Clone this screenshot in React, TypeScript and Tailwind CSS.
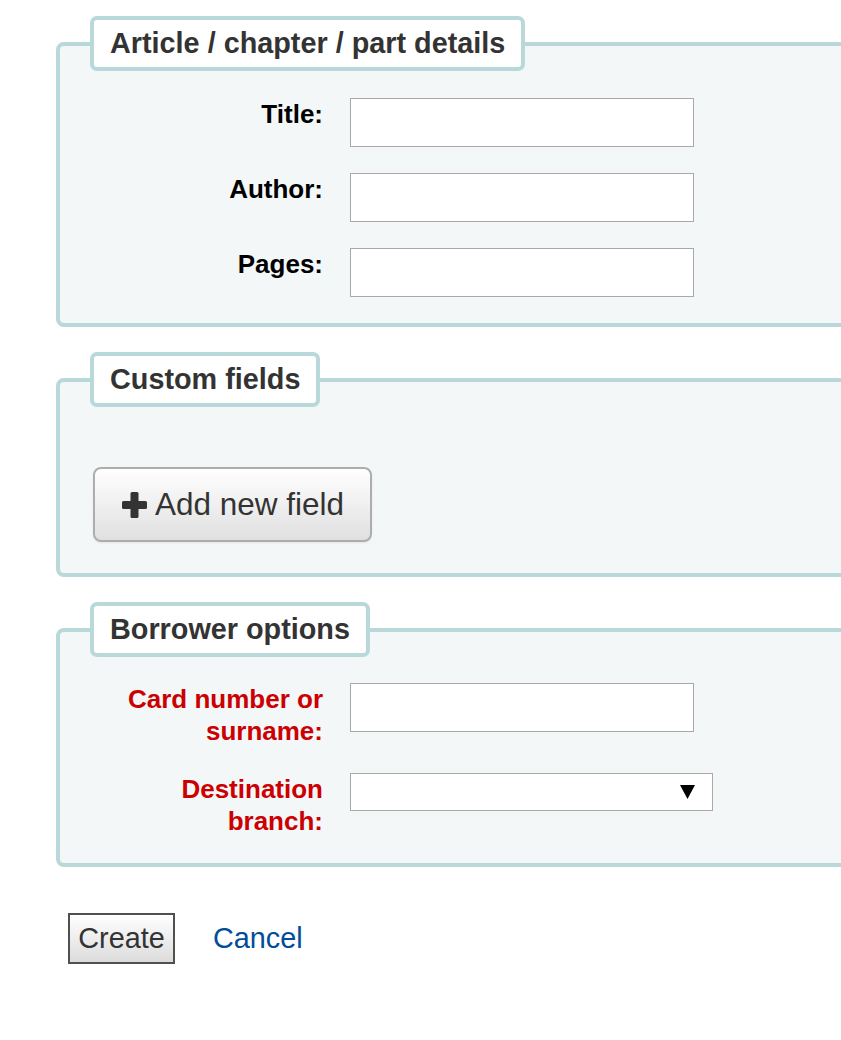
import React from "react";

const font = { fontFamily: '"Liberation Sans", Arial, sans-serif' };

function Legend({ children }: { children: React.ReactNode }) {
  return (
    <legend className="ml-[30px] rounded-[7px] border-4 border-[#b9d8d9] bg-white px-4 py-[7px] text-[28.8px] font-bold leading-[33px] text-[#333]">
      {children}
    </legend>
  );
}

function Row({
  label,
  required,
  children,
}: {
  label: string;
  required?: boolean;
  children: React.ReactNode;
}) {
  return (
    <div className="flex items-start">
      <label
        className={`ml-[53px] w-[210px] text-right text-[26px] font-bold leading-[32px] ${
          required ? "text-[#cc0000]" : "text-black"
        }`}
      >
        {label}
      </label>
      <div className="ml-[27px]">{children}</div>
    </div>
  );
}

function TextInput() {
  return (
    <input
      type="text"
      className="block h-[49px] w-[344px] border border-[#a9a9a9] bg-white px-2 text-[25px] outline-none"
    />
  );
}

export default function App() {
  return (
    <div className="min-h-[1040px] w-[841px] overflow-hidden bg-white pt-[16px]" style={font}>
      <div className="ml-[56px] flex w-[900px] flex-col gap-[25px]">
        <fieldset className="rounded-[8px] border-4 border-[#b9d8d9] bg-[#f3f7f8] pb-[26px] pt-[27px]">
          <Legend>Article / chapter / part details</Legend>
          <div className="flex flex-col gap-[26px]">
            <Row label="Title:">
              <TextInput />
            </Row>
            <Row label="Author:">
              <TextInput />
            </Row>
            <Row label="Pages:">
              <TextInput />
            </Row>
          </div>
        </fieldset>

        <fieldset className="rounded-[8px] border-4 border-[#b9d8d9] bg-[#f3f7f8] pb-[31px] pt-[60px]">
          <Legend>Custom fields</Legend>
          <div className="pl-[33px]">
            <button
              type="button"
              className="flex h-[75px] w-[279px] items-center gap-[8px] rounded-[8px] border-2 border-[#adadad] bg-gradient-to-b from-white to-[#e0e0e0] pl-[27px] text-[31.5px] leading-none text-[#333] shadow-[0_1px_2px_rgba(0,0,0,0.08)]"
            >
              <svg width="25" height="26" viewBox="0 0 25 26" className="shrink-0">
                <rect x="8.5" y="0" width="8" height="26" rx="1.5" fill="#333" />
                <rect x="0" y="9" width="25" height="8" rx="1.5" fill="#333" />
              </svg>
              <span>Add new field</span>
            </button>
          </div>
        </fieldset>

        <fieldset className="rounded-[8px] border-4 border-[#b9d8d9] bg-[#f3f7f8] pb-[26px] pt-[26px]">
          <Legend>Borrower options</Legend>
          <div className="flex flex-col gap-[26px]">
            <Row label="Card number or surname:" required>
              <TextInput />
            </Row>
            <Row label="Destination branch:" required>
              <div className="relative h-[38px] w-[363px]">
                <select className="block h-[38px] w-[363px] appearance-none border border-[#a9a9a9] bg-white text-[22px] outline-none" />
                <svg
                  width="15"
                  height="14"
                  viewBox="0 0 15 14"
                  className="pointer-events-none absolute right-[18px] top-[12px]"
                >
                  <polygon points="0,0 15,0 7.5,14" fill="#000" />
                </svg>
              </div>
            </Row>
          </div>
        </fieldset>
      </div>

      <div className="ml-[68px] mt-[46px] flex items-center gap-[38px]">
        <button
          type="button"
          className="h-[51px] w-[107px] border-2 border-[#505050] bg-gradient-to-b from-white to-[#dcdcdc] text-[28.8px] leading-none text-[#333]"
        >
          Create
        </button>
        <a href="#" className="text-[28.8px] leading-none text-[#004d99]">
          Cancel
        </a>
      </div>
    </div>
  );
}
